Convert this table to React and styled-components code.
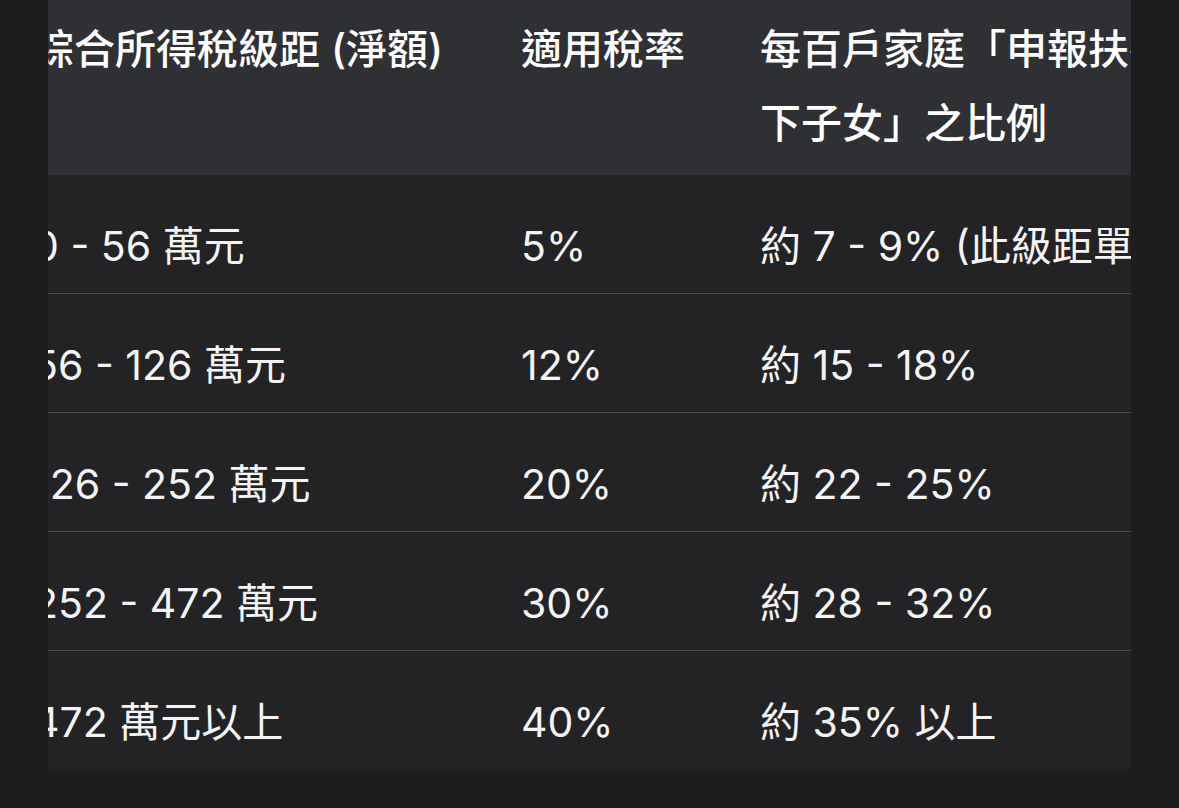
import React from 'react'
import styled, { createGlobalStyle } from 'styled-components'

const rows = [
    ['0 - 56 萬元', '5%', '約 7 - 9% (此級距單身者居多)'],
    ['56 - 126 萬元', '12%', '約 15 - 18%'],
    ['126 - 252 萬元', '20%', '約 22 - 25%'],
    ['252 - 472 萬元', '30%', '約 28 - 32%'],
    ['472 萬元以上', '40%', '約 35% 以上'],
]

const App = () => {
    return (
        <>
            <GlobalStyle />
            <Page>
                <Frame>
                    <Table>
                        <colgroup>
                            <col style={{ width: 488 }} />
                            <col style={{ width: 239 }} />
                            <col style={{ width: 600 }} />
                        </colgroup>
                        <thead>
                            <tr>
                                <HeadCell>綜合所得稅級距 (淨額)</HeadCell>
                                <HeadCell>適用稅率</HeadCell>
                                <HeadCell>每百戶家庭「申報扶養 18 歲以<br />下子女」之比例</HeadCell>
                            </tr>
                        </thead>
                        <tbody>
                            {rows.map((r, i) => (
                                <Row key={i}>
                                    {r.map((c, j) => <Cell key={j}>{c}</Cell>)}
                                </Row>
                            ))}
                        </tbody>
                    </Table>
                </Frame>
            </Page>
        </>
    )
}

export default App

const GlobalStyle = createGlobalStyle`
    html, body {
        margin: 0;
        padding: 0;
        background-color: #1b1d1f;
    }
`
const Page = styled.div`
    width: 1179px;
    height: 808px;
    background-color: #1b1d1f;
    font-family: "Inter", "Noto Sans CJK TC", sans-serif;
    color: #f4f4f5;
    overflow: hidden;
`
const Frame = styled.div`
    margin-left: 48px;
    width: 1083px;
    overflow: hidden;
`
const Table = styled.table`
    border-collapse: collapse;
    table-layout: fixed;
    width: 1327px;
    margin-left: -39px;
`
const HeadCell = styled.th`
    background-color: #2f3033;
    padding: 12px 24px 15px;
    font-size: 41px;
    line-height: 74px;
    font-weight: 500;
    text-align: left;
    vertical-align: top;
    white-space: nowrap;
    color: #ffffff;
`
const Row = styled.tr`
    background-color: #232325;

    & + & td {
        border-top: 1px solid #4a4a4d;
    }
`
const Cell = styled.td`
    padding: 34px 24px 10px;
    font-size: 41px;
    line-height: 74px;
    font-weight: 400;
    white-space: nowrap;
    vertical-align: top;
`
